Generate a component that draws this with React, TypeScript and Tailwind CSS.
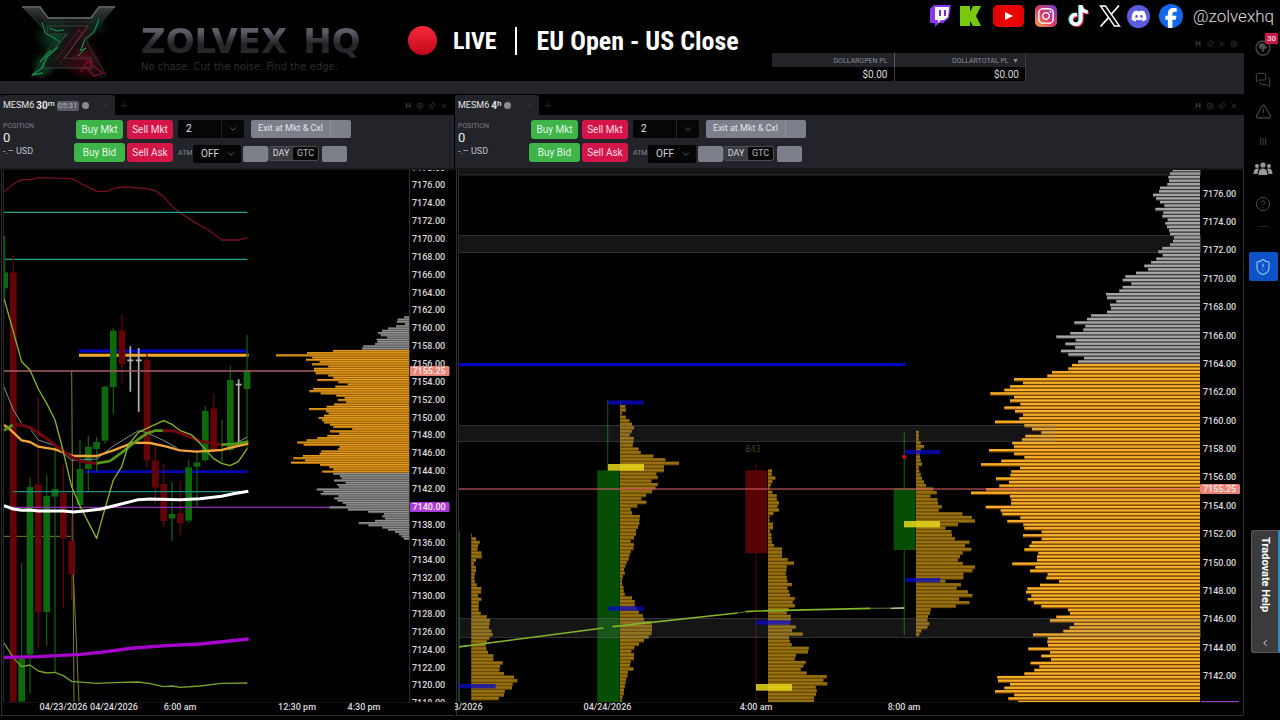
import React from 'react';
import { ChevronDown, ChevronLeft, CircleHelp, MessagesSquare, Pin, Settings, ShieldAlert, TriangleAlert, X, Plus } from 'lucide-react';
import { FaDiscord, FaFacebookF, FaInstagram, FaTiktok, FaXTwitter } from 'react-icons/fa6';

type Row = { y: number; from: number; to: number; tone: Tone };
type Tone = 'gold' | 'gray' | 'softGold' | 'softGray' | 'mini';

const TONES: Record<Tone, [string, string]> = {
  gold: ['#6c3e03', '#f8ae28'],
  gray: ['#3a3a3a', '#a6a6a6'],
  softGold: ['#a8690a', '#e39c1c'],
  softGray: ['#606060', '#939393'],
  mini: ['#6b4a06', '#96700e'],
};

/* Bar edges, top to bottom, in thirds of a pixel. */
const SESSION = [
  698, 690, 685, 687, 682, 660, 657, 639, 648, 660, 673, 646, 670, 667, 683, 676, 681, 687, 690, 702, 699, 690, 667, 655,
  668, 649, 633, 613, 624, 588, 556, 548, 574, 548, 538, 498, 501, 529, 510, 513, 501, 453, 441, 403, 436, 430, 391, 349,
  407, 376, 405, 363, 385, 432, 414, 396, 385, 336, 322, 222, 249, 210, 193, 151, 222, 210, 241, 193, 225, 249, 238, 165,
  253, 276, 304, 256, 246, 217, 222, 147, 222, 253, 184, 123, 240, 214, 211, 168, 207, 178, 138, 93, 210, 214, 213, 137,
  182, 187, 241, 202, 250, 253, 305, 249, 305, 275, 268, 253, 295, 291, 291, 217, 286, 270, 323, 319, 357, 300, 262, 258,
  274, 263, 282, 304, 384, 390, 349, 330, 402, 389, 370, 279, 323, 322, 324, 265, 330, 304, 333, 272, 298, 283, 253, 172,
  174, 210, 193, 165, 223, 205, 235,
];

const DAY = [
  462, 443, 441, 465, 438, 414, 396, 384, 392, 411, 380, 382, 375, 340, 336, 249, 171, 78, 187, 168, 209, 186, 235, 192,
  192, 197, 235, 250, 202, 265, 293, 256, 190, 178, 212, 259, 284, 264, 288, 252, 230, 177, 228, 236, 222, 206, 216, 222,
  240, 250, 307, 240, 268, 232, 202, 170, 142, 161, 269, 264, 214, 209, 159, 130, 165, 123, 210, 238, 250, 217, 250, 270,
  275, 252, 287, 262, 267, 200, 220, 212, 265, 253, 263, 278, 289, 238, 294, 355, 402, 397, 405, 375, 326, 355, 397, 414,
  435, 447, 455, 462,
];

const MINI = [
  { x: 52, y: 465, ends: [54, 66, 77, 72, 70, 82, 83, 66, 60, 65, 66, 62, 61, 62, 68, 82, 81, 72, 82, 74, 74, 74, 80, 98, 108, 106, 105, 112, 116, 106, 98, 95, 97, 102, 118, 118, 146, 138, 136, 150, 180, 190, 176, 174, 152, 150, 134] },
  { x: 498, y: 68, ends: [500, 514, 515, 503, 515, 526, 534, 540, 533, 527, 540, 538, 536, 554, 560, 598, 634, 675, 630, 630, 607, 611, 592, 611, 604, 594, 576, 562, 577, 550, 530, 534, 558, 556, 556, 552, 546, 546, 540, 530, 540, 538, 530, 526, 524, 518, 514, 510, 512, 506, 504, 504, 508, 509, 512, 534, 542, 542, 548, 554, 566, 570, 592, 594, 594, 592, 584, 570, 555, 541, 532, 540, 540, 530, 528, 538, 522, 520, 516, 514, 512, 510, 509, 505, 503] },
  { x: 942, y: 272, ends: [954, 953, 964, 955, 950, 946, 955, 968, 968, 975, 970, 975, 958, 946, 946, 957, 957, 948, 952, 952, 954, 960, 984, 984, 984, 1001, 1020, 998, 997, 995, 998, 1000, 1014, 1000, 1004, 1008, 1022, 1016, 1022, 1004, 998, 1010, 1010, 1008, 1025, 1014, 1046, 1005, 1007, 1013, 1064, 1062, 1026, 1022, 1055, 1048, 1040, 1058, 1118, 1108, 1120, 1085, 1088, 1086, 1080, 1080] },
  { x: 1386, y: 156, ends: [1394, 1394, 1394, 1400, 1410, 1400, 1398, 1398, 1400, 1404, 1394, 1396, 1400, 1404, 1410, 1416, 1438, 1448, 1429, 1450, 1452, 1463, 1454, 1525, 1553, 1563, 1512, 1474, 1492, 1494, 1503, 1546, 1533, 1552, 1526, 1518, 1512, 1526, 1563, 1555, 1528, 1528, 1474, 1521, 1508, 1542, 1555, 1515, 1546, 1505, 1430, 1428, 1422, 1420, 1426, 1420, 1402, 1396] },
];

const sessionRows: Row[] = SESSION.map((v, i) => ({ y: 170 + i * 3.546, from: 940 + v / 3, to: 1200, tone: i < 55 ? 'gray' : 'gold' }));
const dayRows: Row[] = DAY.map((v, i) => ({ y: 317 + i * 2.236, from: 250 + v / 3, to: 409, tone: i < 15 || i > 69 ? 'softGray' : 'softGold' }));
const miniRows: Row[] = MINI.flatMap((m) =>
  m.ends.map((v, i) => ({ y: 380 + m.y / 3 + i * 3.546, from: 454 + m.x / 3, to: 454 + v / 3, tone: 'mini' as Tone })),
);

function Profile({ rows, pitch, bar }: { rows: Row[]; pitch: number; bar: number }) {
  return (
    <g>
      {rows.map((r, i) => (
        <g key={i}>
          <rect x={r.from} y={r.y - bar / 2} width={r.to - r.from} height={pitch} fill={TONES[r.tone][0]} />
          <rect x={r.from} y={r.y - bar / 2} width={r.to - r.from} height={bar} fill={TONES[r.tone][1]} />
        </g>
      ))}
    </g>
  );
}

/* x, high, body top, body bottom, low, direction */
const CANDLES: [number, number, number, number, number, 'g' | 'r'][] = [
  [14, 213, 322, 370, 400, 'g'], [40, 270, 322, 1610, 1610, 'r'], [65, 1194, 1480, 1610, 1610, 'g'],
  [90, 938, 966, 1469, 1585, 'g'], [115, 697, 958, 1342, 1448, 'r'], [140, 930, 993, 1341, 1442, 'g'],
  [165, 840, 972, 995, 1521, 'g'], [190, 900, 983, 1121, 1328, 'r'], [215, 1055, 1127, 1228, 1306, 'r'],
  [240, 825, 912, 1020, 1040, 'g'], [265, 812, 845, 912, 978, 'g'], [290, 815, 831, 852, 920, 'g'],
  [315, 663, 665, 827, 835, 'g'], [340, 488, 497, 666, 747, 'g'], [366, 449, 496, 598, 655, 'r'],
  [441, 568, 584, 886, 910, 'r'], [466, 845, 886, 968, 1017, 'r'], [491, 896, 957, 1068, 1085, 'r'],
  [516, 950, 1047, 1061, 1127, 'g'], [541, 951, 1045, 1075, 1110, 'r'], [566, 886, 907, 1067, 1075, 'g'],
  [591, 855, 892, 905, 1027, 'g'], [616, 724, 738, 886, 890, 'g'], [641, 686, 730, 855, 860, 'r'],
  [691, 604, 645, 855, 860, 'g'], [741, 510, 618, 672, 850, 'g'],
];

const DOJIS = [[391, 544, 680, 586], [416, 549, 740, 586], [716, 643, 845, 659]];

function PriceLabels({ x, first, top, step, count }: { x: number; first: number; top: number; step: number; count: number }) {
  return (
    <g fill="#dadada" fontSize="9" fontWeight="500">
      {Array.from({ length: count }, (_, i) => (
        <text key={i} x={x} y={top + i * step + 3}>{(first - i * 2).toFixed(2)}</text>
      ))}
    </g>
  );
}

function PriceTag({ x, y, value, color }: { x: number; y: number; value: string; color: string }) {
  return (
    <g>
      <rect x={x} y={y - 5} width="40" height="10" rx="1.5" fill={color} />
      <text x={x + 3} y={y + 3} fontSize="9" fontWeight="500" fill="#ffe9e4">{value}</text>
    </g>
  );
}

function HalfHourChart() {
  return (
    <svg viewBox="0 168 454 548" className="block h-full w-full" role="img" aria-label="MESM6 30 minute chart">
      <clipPath id="plotA"><rect x="3" y="170" width="448" height="532" /></clipPath>
      <g clipPath="url(#plotA)">
        <g transform="translate(0 165) scale(0.33333)" fill="none" strokeLinejoin="round">
          <path d="M12 80L40 57 65 44 90 44 115 38 215 41 245 57 290 79 320 79 345 69 375 66 440 71 465 77 490 94 515 122 540 143 590 176 617 190 665 225 717 225 742 217" stroke="#701020" strokeWidth="4" />
          <path d="M12 142H742M12 283H742" stroke="#23a08c" strokeWidth="4" />
          <path d="M215 618L222 1610M12 1114H215L237 1610" stroke="#80812a" strokeWidth="3" />
          <path d="M237 558H742" stroke="#0404c8" strokeWidth="9" />
          <path d="M237 571H746" stroke="#f2a62c" strokeWidth="9" />
          <path d="M255 920H742" stroke="#0404b8" strokeWidth="8" />
          {CANDLES.map(([x, hi, t, b, lo, d]) => (
            <g key={x}>
              <path d={`M${x} ${hi}V${t}M${x} ${b}V${lo}`} stroke={d === 'g' ? '#0d5a0d' : '#5a0a0c'} strokeWidth="4" />
              <rect x={x - 10} y={t} width="20" height={b - t} fill={d === 'g' ? '#0c6a0c' : '#640408'} />
            </g>
          ))}
          <path d="M666 765V890" stroke="#0d5a0d" strokeWidth="4" />
          {DOJIS.map(([x, a, b, m]) => (
            <path key={x} d={`M${x} ${a}V${b}M${x - 9} ${m}H${x + 9}`} stroke="#b4b4b8" strokeWidth="5" />
          ))}
          <path d="M12 666L40 735 65 775M93 795L115 825 165 842 215 886 290 882 340 843 415 797 441 803 490 826 530 848M700 839L742 816" stroke="#6f9496" strokeWidth="3" />
          <path d="M40 980H742" stroke="#1c8c84" strokeWidth="4" />
          <path d="M12 1027H1228" stroke="#8a32b0" strokeWidth="4" />
          <path d="M12 618H1228" stroke="#a85e68" strokeWidth="4" />
          <path d="M12 780L30 793 65 826 90 831 115 845 165 853 190 862 220 873 290 873 340 856 400 833 450 834 500 845 540 856 590 860 666 855 700 846 745 836" stroke="#f0a43c" strokeWidth="7" />
          <path d="M38 778L65 780 90 788 115 803 165 840 215 876 240 888 265 893 290 895M488 797L520 797 550 808 600 828 665 839" stroke="#700410" strokeWidth="9" />
          <path d="M12 796L38 780M290 895L330 888 365 863 415 823 441 805 465 797 488 797M665 839L700 837 745 830" stroke="#559a14" strokeWidth="8" />
          <path d="M12 400L40 500 65 590 90 615 115 672 140 715 165 765 185 840 215 965 240 1023 290 1120 315 1030 340 945 365 905 385 840 415 802 440 790 491 767 516 778 541 797 575 810 600 835 640 880 665 895 690 902 715 890 742 850" stroke="#86b52c" strokeWidth="4" />
          <path d="M12 1434L40 1478 65 1505 90 1500 115 1518 140 1524 165 1522 190 1532 215 1549 290 1555 340 1553 415 1551 450 1556 491 1565 516 1563 541 1567 600 1563 665 1555 742 1554" stroke="#76a22e" strokeWidth="4" />
          <path d="M12 1022L40 1032 65 1036 90 1035 115 1038 190 1038 220 1041 245 1039 300 1033 340 1023 415 1004 450 1002 540 1004 600 1001 665 994 700 986 745 979" stroke="#fff" strokeWidth="9" />
          <path d="M12 1477L115 1475 240 1468 300 1462 400 1449 500 1442 600 1437 746 1422" stroke="#a604cc" strokeWidth="10" />
        </g>
        <Profile rows={dayRows} pitch={2.236} bar={1.2} />
        <PriceLabels x={412} first={7178} top={167.5} step={17.86} count={31} />
        <PriceTag x={409.5} y={371} value="7155.25" color="#e88478" />
        <PriceTag x={409.5} y={507} value="7140.00" color="#a83ad8" />
      </g>
      <path d="M1.5 169V715.5H454M0 169H454M409.5 170V702M3.5 170V702" stroke="#303033" fill="none" />
      <path d="M4 702.5H450" stroke="#161616" />
      <g fill="#dadada" fontSize="9" fontWeight="500" textAnchor="middle">
        <text x="63.500" y="710">04/23/2026</text>
        <text x="114" y="710">04/24/2026</text>
        <text x="180" y="710">6:00 am</text>
        <text x="297" y="710">12:30 pm</text>
        <text x="364" y="710">4:30 pm</text>
      </g>
    </svg>
  );
}

function Band({ y, height, width }: { y: number; height: number; width: number }) {
  return <rect x="457.500" y={y} width={width} height={height} fill="#808080" fillOpacity="0.16" stroke="#8a8a8a" strokeOpacity="0.3" />;
}

function FourHourChart() {
  return (
    <svg viewBox="455 168 789 548" className="block h-full w-full" role="img" aria-label="MESM6 4 hour chart">
      <clipPath id="plotB"><rect x="459" y="170" width="784" height="532" /></clipPath>
      <g clipPath="url(#plotB)">
        <g transform="translate(454 380) scale(0.33333)" fill="none">
          <path d="M16 455V965" stroke="#0b4d0b" strokeWidth="4" />
          <path d="M461 60V271M1351 155V765" stroke="#0b4d0b" strokeWidth="4" />
          <path d="M906 252V960" stroke="#3c0306" strokeWidth="4" />
          <rect x="430" y="271" width="67" height="700" fill="#064e06" />
          <rect x="874" y="271" width="66" height="249" fill="#560406" />
          <rect x="1319" y="325" width="66" height="185" fill="#064e06" />
          <circle cx="1351" cy="231" r="7" fill="#b8101c" />
        </g>
        <Profile rows={miniRows} pitch={3.546} bar={2.4} />
        <Profile rows={sessionRows} pitch={3.546} bar={2.3} />
        <Band y={160} height={15} width={743} />
        <Band y={235.5} height={17} width={743} />
        <Band y={425.500} height={16} width={597} />
        <Band y={618.500} height={19} width={743} />
        <path d="M459 364.500H905" stroke="#0404c8" strokeWidth="3" />
        <path d="M459 489H1200" stroke="#d05a66" strokeOpacity="0.75" strokeWidth="1.500" />
        <g transform="translate(454 380) scale(0.33333)">
          <g fill="#0808c8" fillOpacity="0.75">
            <rect x="462" y="61" width="107" height="13" />
            <rect x="462" y="679" width="107" height="13" />
            <rect x="14" y="912" width="111" height="13" />
            <rect x="906" y="721" width="105" height="13" />
            <rect x="1354" y="210" width="105" height="13" />
            <rect x="1354" y="594" width="105" height="13" />
          </g>
          <g fill="#e8d81c" fillOpacity="0.85">
            <rect x="462" y="252" width="108" height="20" />
            <rect x="906" y="912" width="108" height="20" />
            <rect x="1350" y="423" width="108" height="19" />
          </g>
          <path d="M14 801L448 744M475 740L850 699M875 695L906 693 1250 685" stroke="#82b42c" strokeWidth="5" fill="none" />
          <path d="M850 699L875 695M1250 685L1351 684" stroke="#5c7c30" strokeWidth="3" />
          <path d="M1310 685L1351 684" stroke="#b4cc90" strokeWidth="4" />
        </g>
        <text x="753" y="452" fontSize="8" textAnchor="middle" fill="#3d4a1c" fontFamily="DejaVu Sans">843</text>
        <PriceLabels x={1203} first={7176} top={193.700} step={28.37} count={18} />
        <PriceTag x={1200} y={489} value="7155.25" color="#e88478" />
        <rect x="1201" y="701" width="38" height="2" fill="#9a3ad0" />
      </g>
      <path d="M456.500 169V715.500M455 169H1244M1243.500 169V715.500H456M458.500 170V702" stroke="#303033" fill="none" />
      <path d="M459 702.500H1240" stroke="#161616" />
      <g fill="#dadada" fontSize="9" fontWeight="500" textAnchor="middle">
        <text x="482.500" y="710" textAnchor="end">3/2026</text>
        <text x="607.500" y="710">04/24/2026</text>
        <text x="756" y="710">4:00 am</text>
        <text x="904" y="710">8:00 am</text>
      </g>
    </svg>
  );
}

function WindowControls({ gearFirst = true }: { gearFirst?: boolean }) {
  const gear = <button aria-label="Settings"><Settings size={8} /></button>;
  return (
    <div className="flex items-center gap-1 text-[#3e3e40]">
      <button className="w-2 text-[8px] font-bold leading-none">H</button>
      {gearFirst && gear}
      <button aria-label="Pin"><Pin size={8} className="rotate-45" /></button>
      <button aria-label="Close"><X size={8} /></button>
      {!gearFirst && gear}
    </div>
  );
}

const BUY = 'h-[19px] rounded-[3px] bg-[#3eb449] text-center text-[10px] leading-[19px] text-[#e4f6e4]';
const SELL = 'h-[19px] rounded-[3px] bg-[#d31547] text-center text-[10px] leading-[19px] text-[#ffdbe3]';

function Toolbar({ id }: { id: string }) {
  return (
    <div className="flex h-[53px] items-start bg-[#232429] pt-1">
      <div className="w-[74px] pl-[3px] pt-[3px]">
        <div className="text-[7px] leading-[8px] text-[#7c7c80]">POSITION</div>
        <div className="text-[13px] leading-4 text-[#e8e8e8]">0</div>
        <div className="text-[9px] leading-[10px] text-[#c0c0c4]">-.– USD</div>
      </div>
      <div className="flex w-[51px] flex-col gap-1 pt-px">
        <button className={`${BUY} mx-[2px] w-[47px]`}>Buy Mkt</button>
        <button className={`${BUY} w-[51px]`}>Buy Bid</button>
      </div>
      <div className="ml-[2px] flex w-[46px] flex-col gap-1 pt-px">
        <button className={SELL}>Sell Mkt</button>
        <button className={SELL}>Sell Ask</button>
      </div>
      <div className="ml-[5px] flex flex-col gap-[6px]">
        <div className="flex h-[19px] items-center">
          <div className="flex h-[18px] w-[66px] rounded-[2px] bg-[#060607]">
            <input aria-label="Quantity" defaultValue="2" className="w-11 border-r border-[#232429] bg-transparent pl-2 text-[10px] text-[#e8e8e8]" />
            <button aria-label="Choose quantity" className="flex flex-1 items-center justify-center text-[#6a6a6e]"><ChevronDown size={10} /></button>
          </div>
          <div className="ml-[7px] flex h-[18px] w-[100px] rounded-[2px] bg-[#7d808b] text-[#e2e4ea]">
            <button className="w-20 whitespace-nowrap border-r border-[#8c8f99] text-[9px]">Exit at Mkt &amp; Cxl</button>
            <button aria-label="More exit options" className="flex-1" />
          </div>
        </div>
        <div className="flex h-[19px] items-center">
          <label htmlFor={`atm-${id}`} className="w-[15px] text-[7px] text-[#88888c]">ATM</label>
          <div className="relative h-[18px] w-12">
            <select id={`atm-${id}`} className="block h-[18px] w-full appearance-none rounded-[2px] bg-[#060607] py-0 pl-2 text-[10px] leading-[18px] text-[#d8d8d8]">
              <option>OFF</option>
            </select>
            <ChevronDown size={10} className="pointer-events-none absolute right-[5px] top-1 text-[#6a6a6e]" />
          </div>
          <button aria-label="Order type" className="ml-[2px] h-4 w-[25px] rounded-[2px] bg-[#7d808b]" />
          <div className="flex h-[15px] w-[51px] rounded-[3px] border border-[#4c4d54] bg-[#3a3b41] text-[9px] leading-[13px]">
            <button className="w-6 text-[#dcdcdc]">DAY</button>
            <button className="flex-1 rounded-[2px] bg-[#060607] text-[#b8b8b8]">GTC</button>
          </div>
          <button aria-label="Order options" className="ml-[3px] h-4 w-[25px] rounded-[2px] bg-[#7d808b]" />
        </div>
      </div>
    </div>
  );
}

function ChartPanel({ id, frame, unit, timer, tab, grow, children }: { id: string; frame: string; unit: string; timer?: string; tab: string; grow: string; children: React.ReactNode }) {
  return (
    <section className={`flex min-w-0 basis-0 flex-col ${grow}`}>
      <div className="flex h-5 items-center bg-black">
        <div className={`flex h-full items-center rounded-t-[2px] bg-[#232429] pl-[3px] pt-px text-[9px] text-[#e4e4e4] ${tab}`}>
          <span>MESM6</span>
          <b className="ml-[2px] flex items-start text-[10px] leading-3">{frame}<span className="text-[8px] font-medium leading-[8px]">{unit}</span></b>
          {timer && <span className="ml-[2px] rounded-[2px] bg-[#595b66] px-px text-[8px] leading-[10px] text-[#a9abb8]">{timer}</span>}
          <i className="ml-[3px] h-[7px] w-[7px] rounded-full bg-[#8c8c90]" />
          <button aria-label="Close tab" className="ml-auto mr-[5px] text-[#3c3c40]"><X size={7} /></button>
        </div>
        <button aria-label="Add tab" className="ml-1 text-[#2c2c2e]"><Plus size={9} /></button>
        <div className="ml-auto pr-[6px] pt-px"><WindowControls /></div>
      </div>
      <Toolbar id={id} />
      <div className="min-h-0 flex-1">{children}</div>
    </section>
  );
}

function Emblem() {
  return (
    <svg viewBox="0 0 96 76" className="h-[76px] w-24" aria-label="Zolvex emblem">
      <defs>
        <linearGradient id="steel" x1="0" y1="0" x2="0" y2="1"><stop offset="0" stopColor="#3c3e40" /><stop offset="0.2" stopColor="#121516" /><stop offset="0.6" stopColor="#0a0d0c" /><stop offset="1" stopColor="#0c0e0e" /></linearGradient>
        <linearGradient id="zed" x1="0" y1="0.3" x2="1" y2="0.7"><stop offset="0" stopColor="#0a2a1a" /><stop offset="0.45" stopColor="#161314" /><stop offset="1" stopColor="#42060f" /></linearGradient>
        <radialGradient id="glowG"><stop offset="0" stopColor="#0a5a30" stopOpacity="0.7" /><stop offset="1" stopColor="#0a5a30" stopOpacity="0" /></radialGradient>
        <radialGradient id="glowR"><stop offset="0" stopColor="#7a0820" stopOpacity="0.75" /><stop offset="1" stopColor="#7a0820" stopOpacity="0" /></radialGradient>
      </defs>
      <path d="M2 2H20L28 13H71L79 2H95L68 36 88 73H74L48 50 24 73H9L33 35Z" fill="url(#steel)" />
      <circle cx="35" cy="32" r="22" fill="url(#glowG)" />
      <circle cx="24" cy="60" r="14" fill="url(#glowG)" />
      <circle cx="64" cy="56" r="20" fill="url(#glowR)" />
      <circle cx="62" cy="28" r="12" fill="url(#glowR)" opacity="0.5" />
      <circle cx="76" cy="20" r="14" fill="url(#glowG)" opacity="0.5" />
      <path d="M2 2H20L28 13H71L79 2H95" fill="none" stroke="#565859" strokeWidth="2" />
      <path d="M7 5L34 35 13 70M90 5L66 36 86 70" fill="none" stroke="#242a28" strokeWidth="1.200" />
      <path d="M18 5L26 17H72L80 5" fill="none" stroke="#2f3334" strokeWidth="1" />
      <path d="M27 21H68L45 53H71V63H24V56L47 29H27Z" fill="url(#zed)" stroke="#35403c" strokeWidth="1.200" />
      <path d="M66 23L40 58M60 24L36 55M50 54H70M57 25L62 28 56 36" fill="none" stroke="#641426" strokeWidth="0.900" />
      <path d="M22 17L25 28 34 33 40 37M29 23L37 26 44 25M64 38L60 46 66 43 58 51M79 14L74 27 65 34 62 42" fill="none" stroke="#1e9458" strokeWidth="1" />
      <path d="M38 42L27 52 22 63 12 70 23 68M31 45L20 57" fill="none" stroke="#119048" strokeWidth="1.300" />
      <path d="M61 67L68 55 73 61 83 68 74 71 66 62" fill="none" stroke="#8a1028" strokeWidth="1.100" />
    </svg>
  );
}

function Socials() {
  return (
    <div className="flex h-8 items-center">
      <a href="#twitch" aria-label="Twitch" className="mr-[9px]">
        <svg viewBox="0 0 22 24" className="h-6 w-[22px]">
          <path d="M1 5L5 1H22L20 14 14 19H10L6 23V19H1Z" fill="#8a35ee" />
          <path d="M6 3H20L19 13 15 16H12L9 19V16H6Z" fill="#fff" />
          <path d="M11 6V12M16 6V12" stroke="#7a2ad8" strokeWidth="2" />
        </svg>
      </a>
      <a href="#kick" aria-label="Kick" className="mr-3">
        <svg viewBox="0 0 21 22" className="h-[22px] w-[21px]">
          <path d="M0 1H10V7L13 1H21L16 11 21 21H13L10 16V21H0Z" fill="#78c80e" />
        </svg>
      </a>
      <a href="#youtube" aria-label="YouTube" className="mr-[11px]">
        <svg viewBox="0 0 31 22" className="h-[22px] w-[31px]">
          <rect width="31" height="22" rx="5" fill="#e60000" />
          <path d="M12 7L20 11 12 15Z" fill="#fff" />
        </svg>
      </a>
      <a href="#instagram" aria-label="Instagram" className="mr-[10px] flex h-[22px] w-[22px] items-center justify-center rounded-[5px] bg-linear-to-tr from-[#f9a030] via-[#d8306c] to-[#6a30c8] text-white"><FaInstagram size={18} /></a>
      <a href="#tiktok" aria-label="TikTok" className="mr-3 grid h-[22px] w-5">
        <FaTiktok size={21} color="#24d8d0" className="col-start-1 row-start-1" />
        <FaTiktok size={21} color="#f02a54" className="col-start-1 row-start-1 ml-[2px] mt-px" />
        <FaTiktok size={21} color="#fff" className="col-start-1 row-start-1 ml-px" />
      </a>
      <a href="#x" aria-label="X" className="mr-[6px] text-white">
        <svg viewBox="0 0 22 22" className="h-[22px] w-[22px]" fill="none" stroke="#fff">
          <path d="M1.500 1H6.500L20.500 21H15.500Z" strokeWidth="1.400" />
          <path d="M20 0.500L12.300 9.300M9.700 12.400L1.500 21.500" strokeWidth="1.700" />
        </svg>
      </a>
      <a href="#discord" aria-label="Discord" className="mr-[9px] flex h-[23px] w-[23px] items-center justify-center rounded-full bg-[#5c5be0] text-white"><FaDiscord size={16} /></a>
      <a href="#facebook" aria-label="Facebook" className="mr-[10px] flex h-6 w-6 items-end justify-center overflow-hidden rounded-full bg-[#1268ee] text-white"><FaFacebookF size={20} /></a>
      <span className="text-[17px] font-light leading-5 text-[#dedede]">@zolvexhq</span>
    </div>
  );
}

const STEEL_TEXT = 'bg-linear-to-b from-[#5a5d66] from-25% via-[#222327] via-60% to-[#2e2f33] bg-clip-text text-transparent';

function StreamBanner() {
  return (
    <header className="pointer-events-none absolute inset-x-0 top-0 flex h-20 items-start">
      <div className="pl-5 pt-[5px]"><Emblem /></div>
      <div className="w-[222px] pl-[25px] pt-[23px]">
        <h1 className="flex gap-4 whitespace-nowrap font-['DejaVu_Sans'] text-[34px] font-bold leading-9">
          <span className={STEEL_TEXT}>ZOLVEX</span>
          <span className={STEEL_TEXT}>HQ</span>
        </h1>
        <p className="whitespace-nowrap font-['DejaVu_Sans'] text-[10px] leading-4 text-[#2d2d2f]">No chase. Cut the noise. Find the edge.</p>
      </div>
      <div className="ml-[70px] flex items-center pt-[26px] font-['Roboto_Condensed','Liberation_Sans_Narrow',Roboto,sans-serif] text-[24px] font-bold leading-7 text-white">
        <i className="h-[29px] w-[29px] rounded-full bg-linear-to-b from-[#f8283a] to-[#c00418]" />
        <span className="ml-4">LIVE</span>
        <i className="ml-[18px] h-7 w-[2px] bg-white" />
        <span className="ml-5 text-[26px]">EU Open - US Close</span>
      </div>
      <div className="ml-auto pr-[6px]"><Socials /></div>
    </header>
  );
}

function ProfitTable() {
  return (
    <table className="w-[254px] border-collapse text-right">
      <thead>
        <tr className="h-[14px] bg-[#232429] text-[7px] leading-[8px] text-[#8c8c90]">
          <th className="w-[122px] border-r border-[#55565a] p-0 pr-[6px] pt-px font-normal">DOLLAROPEN PL</th>
          <th className="border-r border-[#3c3d40] p-0 pr-[6px] pt-px font-normal">DOLLARTOTAL PL &nbsp;▼</th>
        </tr>
      </thead>
      <tbody>
        <tr className="h-[14px] bg-black text-[10px] leading-3 text-[#dcdcdc]">
          <td className="border-r border-[#3c3d40] p-0 pr-[6px] pt-[2px]">$0.00</td>
          <td className="border-r border-[#3c3d40] p-0 pr-[6px] pt-[2px]">$0.00</td>
        </tr>
      </tbody>
    </table>
  );
}

function Sidebar() {
  return (
    <nav className="flex w-9 flex-col items-center pt-10 pl-[2px] text-[#4a4a4d]">
      <button aria-label="News" className="relative">
        <svg viewBox="0 0 16 16" className="h-4 w-4">
          <circle cx="8" cy="8" r="7" fill="none" stroke="currentColor" strokeWidth="1.300" />
          <path d="M4 4.500L7 3 10 3.800 9.500 5 12 6.500 11 8.500 9 9.500 8.500 12.500 7.200 11.500 7 9.500 5 8.800 3.500 7Z" fill="currentColor" />
        </svg>
        <span className="absolute -top-[7px] left-[10px] rounded-[1px] bg-[#c8184a] px-[2px] text-[8px] font-medium leading-[11px] text-[#ffdbe3]">30</span>
      </button>
      <button aria-label="Chat" className="mt-4"><MessagesSquare size={16} strokeWidth={1.5} /></button>
      <button aria-label="Alerts" className="mt-[15px]"><TriangleAlert size={17} strokeWidth={1.5} /></button>
      <button aria-label="Columns" className="mt-4 text-[9px] leading-3">III</button>
      <button aria-label="Community" className="mt-[14px] text-[#98989a]">
        <svg viewBox="0 0 20 14" className="h-[14px] w-5" fill="currentColor">
          <circle cx="4" cy="4" r="2" /><circle cx="16" cy="4" r="2" /><circle cx="10" cy="3" r="2.600" />
          <path d="M0.500 12C0.500 8.500 2 6.500 4 6.500 5 6.500 5.600 7 6 7.400 5 8.600 4.600 10 4.600 12ZM19.500 12C19.500 8.500 18 6.500 16 6.500 15 6.500 14.400 7 14 7.400 15 8.600 15.400 10 15.400 12ZM5.500 13C5.500 8.800 7.300 6.400 10 6.400S14.500 8.800 14.500 13Z" />
        </svg>
      </button>
      <button aria-label="Help" className="mt-5"><CircleHelp size={16} strokeWidth={1.5} /></button>
      <i className="mt-[14px] h-px w-[10px] bg-[#232325]" />
      <button aria-label="Risk settings" className="mt-[25px] flex h-[29px] w-[29px] items-center justify-center rounded-[2px] bg-[#0b53c6] text-[#9cc4f4]"><ShieldAlert size={18} strokeWidth={1.500} /></button>
      <button className="mb-[67px] mt-auto flex h-[123px] w-[29px] flex-col items-center justify-between self-end rounded-l-[3px] border border-r-2 border-[#5a5a5a] border-r-[#2a8cc8] bg-[#3b3b3c] pb-1 pt-[6px] text-white">
        <span className="text-[11px] font-bold leading-3 [writing-mode:vertical-rl]">Tradovate Help</span>
        <ChevronLeft size={10} />
      </button>
    </nav>
  );
}

export default function App() {
  return (
    <div className="relative flex h-screen min-h-[640px] bg-black font-['Roboto','Liberation_Sans',sans-serif]">
      <main className="flex min-w-0 flex-1 flex-col">
        <div className="flex h-[53px] items-end justify-end pb-[5px] pr-[6px]"><WindowControls gearFirst={false} /></div>
        <div className="flex h-7 justify-end">
          <ProfitTable />
          <div className="w-[218px] bg-[#232429]" />
        </div>
        <div className="h-[13px] bg-[#232429]" />
        <div className="mt-px flex min-h-0 flex-1 gap-px pb-1">
          <ChartPanel id="m30" frame="30" unit="m" timer="05:31" tab="w-[115px]" grow="grow-[454]"><HalfHourChart /></ChartPanel>
          <ChartPanel id="h4" frame="4" unit="h" tab="w-[84px]" grow="grow-[789]"><FourHourChart /></ChartPanel>
        </div>
      </main>
      <Sidebar />
      <StreamBanner />
    </div>
  );
}
